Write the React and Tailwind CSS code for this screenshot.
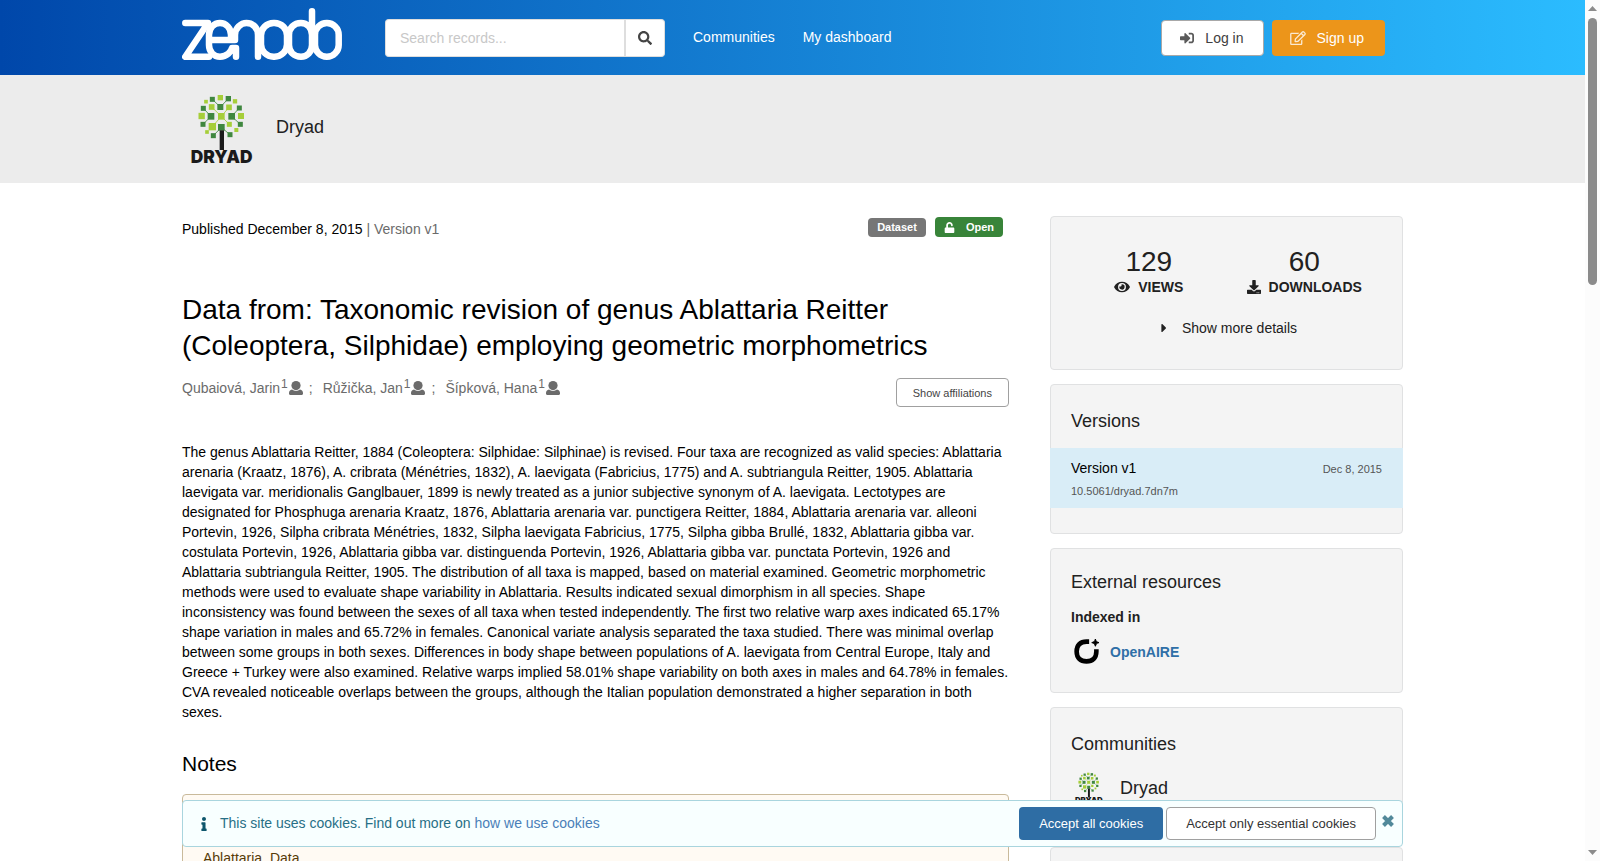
import {
  FaSearch,
  FaSignInAlt,
  FaRegEdit,
  FaUnlock,
  FaEye,
  FaDownload,
  FaCaretRight,
  FaInfo,
} from 'react-icons/fa';

const LIGHT = '#a6ce39';
const DARK = '#3f873f';

// center x, center y, size, color
const leaves = [
  [121, 38, 16, LIGHT],
  [97, 43, 15, DARK],
  [145, 41, 16, DARK],
  [78, 50, 11, LIGHT],
  [165, 49, 13, LIGHT],
  [70, 70, 15, DARK],
  [178, 69, 15, DARK],
  [95, 66, 17, LIGHT],
  [121, 66, 18, DARK],
  [147, 67, 17, LIGHT],
  [65, 93, 19, LIGHT],
  [93, 94, 20, DARK],
  [124, 94, 20, LIGHT],
  [155, 94, 20, DARK],
  [183, 93, 18, LIGHT],
  [69, 118, 15, DARK],
  [97, 125, 22, LIGHT],
  [124, 127, 20, DARK],
  [148, 118, 15, LIGHT],
  [181, 118, 15, DARK],
  [81, 141, 11, LIGHT],
  [169, 135, 12, LIGHT],
  [100, 152, 15, DARK],
  [150, 149, 15, DARK],
];

const creators = [
  { name: 'Qubaiová, Jarin', affiliation: 1 },
  { name: 'Růžička, Jan', affiliation: 1 },
  { name: 'Šípková, Hana', affiliation: 1 },
];

function ZenodoLogo() {
  return (
    <svg viewBox="0 0 160 52" className="h-[52px] w-40" fill="none" stroke="#fff" strokeWidth="6.5" strokeLinecap="round" strokeLinejoin="round" aria-hidden="true">
      <path d="M3.300 15H26L3.300 48.700H27" />
      <path d="M28 32H53V27C53 20 59 15 64.500 15C71 15 76 20 76 27V48.700" />
      <path d="M49 31V27C49 20 44 15 38 15C32 15 27 20 27 27V37C27 44 32 48.700 38 48.700C45 48.700 49 44 50 40H54V48.700" />
      <rect x="79" y="15" width="26" height="33.700" rx="12.500" />
      <path d="M130 3.300V37C130 44 125 48.700 119 48.700C112 48.700 107 44 107 37V27C107 20 112 15 119 15C125 15 130 20 130 27" />
      <rect x="133" y="15" width="23.700" height="33.700" rx="11.800" />
    </svg>
  );
}

function DryadLogo({ className }) {
  return (
    <svg viewBox="6 12 240 240" className={className} role="img" aria-label="Dryad">
      <g stroke={DARK} strokeWidth="2.500">
        <path d="M97 43L121 66L145 41M70 70L93 94L69 118M178 69L155 94L181 118M100 152L124 127L150 149" fill="none" />
        <path d="M95 66L124 94L147 67M97 125L124 94L148 118" stroke={LIGHT} fill="none" />
      </g>
      {leaves.map(([x, y, size, color]) => (
        <rect key={`${x}-${y}`} x={x - size / 2} y={y - size / 2} width={size} height={size} fill={color} />
      ))}
      <rect x="119" y="136" width="13" height="59" fill="#1a1a1a" />
      <text x="125" y="235" textAnchor="middle" fontSize="52" fontWeight="900" fontFamily="Inter, sans-serif" fill="#1a1a1a">
        DRYAD
      </text>
    </svg>
  );
}

function OpenAireLogo() {
  return (
    <svg viewBox="0 0 76 76" className="h-[25px] w-[25px]" aria-hidden="true">
      <path d="M46 8H38C19 8 8 19 8 38C8 57 19 68 38 68C57 68 68 57 68 38V31" fill="none" stroke="#000" strokeWidth="14" />
      <path d="M65 0C67 7 69 9 76 11C69 13 67 15 65 22C63 15 61 13 54 11C61 9 63 7 65 0Z" stroke="#000" strokeWidth="3" />
    </svg>
  );
}

function UserIcon() {
  return (
    <svg viewBox="0 0 14 14" className="h-3.5 w-3.5" fill="currentColor" aria-hidden="true">
      <ellipse cx="7" cy="4.600" rx="4.600" ry="4.600" />
      <path d="M3 8.600C5.300 10.300 8.700 10.300 11 8.600C12.900 9 14 10.200 14 12V12.800C14 13.500 13.500 14 12.800 14H1.200C.5 14 0 13.500 0 12.800V12C0 10.200 1.100 9 3 8.600Z" />
    </svg>
  );
}

function CloseIcon() {
  return (
    <svg viewBox="0 0 12 12" className="h-3 w-3" fill="none" stroke="currentColor" strokeWidth="4" aria-hidden="true">
      <path d="M1.500 1.500L10.500 10.500M10.500 1.500L1.500 10.500" />
    </svg>
  );
}

function Header() {
  return (
    <header className="bg-linear-to-r/srgb from-[#0047aa] to-[#2bbcff] text-white">
      <div className="mx-auto flex h-[75px] w-full max-w-[1221px] items-center">
        <a href="#home" aria-label="Zenodo" className="mt-2 self-start">
          <ZenodoLogo />
        </a>
        <form className="ml-[43px] flex h-[38px]" onSubmit={(e) => e.preventDefault()}>
          <input
            type="text"
            aria-label="Search records"
            placeholder="Search records..."
            className="w-[239px] rounded-l border border-r-0 border-[#dedede] bg-white px-3.5 text-sm text-black placeholder:text-[#c8c8c8]"
          />
          <button
            type="submit"
            aria-label="Search"
            className="flex w-[41px] items-center justify-center rounded-r border border-l-2 border-[#dedede] bg-white text-[#444]"
          >
            <FaSearch className="h-3.5 w-3.5" />
          </button>
        </form>
        <nav className="ml-7 flex gap-7 pb-0.5 text-sm">
          <a href="#communities">Communities</a>
          <a href="#dashboard">My dashboard</a>
        </nav>
        <div className="mr-[18px] ml-auto flex gap-2 text-sm">
          <button className="flex h-9 items-center gap-[11px] rounded border border-[#a8a8a8] bg-white pr-[19px] pl-[18px] text-[#404040]">
            <FaSignInAlt className="h-3.5 w-3.5 text-[#5a5a5a]" />
            Log in
          </button>
          <button className="flex h-9 items-center gap-[11px] rounded bg-[#ec951a] pr-[21px] pl-[18px]">
            <FaRegEdit className="h-3.5 w-4 opacity-80" />
            Sign up
          </button>
        </div>
      </div>
    </header>
  );
}

function Card({ title, children, className = '' }) {
  return (
    <section className={`rounded border border-[#e0e1e2] bg-[#f4f4f4] text-[#212121] ${className}`}>
      {title && <h2 className="px-5 text-lg leading-6">{title}</h2>}
      {children}
    </section>
  );
}

function Stat({ icon, label, value }) {
  return (
    <div className="flex flex-col-reverse">
      <dt className="flex items-center justify-center gap-2 text-sm leading-[18px] font-bold">
        {icon}
        {label}
      </dt>
      <dd className="text-[28px] leading-8">{value}</dd>
    </div>
  );
}

function Sidebar() {
  return (
    <aside className="flex flex-col gap-3.5">
      <Card className="h-[154px] px-5 pt-[29px]">
        <dl className="grid grid-cols-2 text-center">
          <Stat icon={<FaEye className="h-3.5 w-4" />} label="VIEWS" value="129" />
          <Stat icon={<FaDownload className="h-3.5 w-3.5" />} label="DOWNLOADS" value="60" />
        </dl>
        <button className="mx-auto mt-[22px] flex items-center gap-3.5 pl-1 text-sm">
          <FaCaretRight className="h-3.5 w-2" />
          Show more details
        </button>
      </Card>

      <Card title="Versions" className="pt-6 pb-[25px]">
        <div className="-mx-px mt-[15px] bg-[#d9edf7] px-[21px] pt-2 pb-1.5">
          <div className="flex items-center justify-between leading-[22px]">
            <span className="text-sm leading-[22px] text-black">Version v1</span>
            <span className="pt-0.5 text-[11px] text-[#555]">Dec 8, 2015</span>
          </div>
          <a href="#doi" className="block text-[11px] leading-[22px] text-[#555]">
            10.5061/dryad.7dn7m
          </a>
        </div>
      </Card>

      <Card title="External resources" className="h-[145px] pt-[21px]">
        <h3 className="mt-[13px] px-5 text-sm font-bold">Indexed in</h3>
        <a href="#openaire" className="mt-3 flex items-center gap-[11px] px-[23px] text-sm font-bold text-[#2f6fa7]">
          <OpenAireLogo />
          OpenAIRE
        </a>
      </Card>

      <Card title="Communities" className="h-[126px] pt-6">
        <a href="#dryad" className="mt-3.5 flex items-center gap-[13px] px-5 text-lg">
          <DryadLogo className="h-9 w-9" />
          Dryad
        </a>
      </Card>

      <Card className="h-40" />
    </aside>
  );
}

function Record() {
  return (
    <article className="text-sm leading-5 text-black">
      <div className="mt-px flex justify-between leading-6">
        <p>
          Published December 8, 2015 <span className="text-[#6b6b6b]">| Version v1</span>
        </p>
        <div className="mr-1.5 flex h-5 items-end gap-[9px] text-[11px] leading-5 font-bold text-white">
          <span className="rounded-sm bg-[#767676] px-[9px] leading-[19px]">Dataset</span>
          <span className="flex items-center gap-[11px] rounded-sm bg-[#388439] px-[9px]">
            <FaUnlock className="h-[11px] w-[11px]" />
            Open
          </span>
        </div>
      </div>

      <h1 className="mt-[51px] text-[28px] leading-9">
        Data from: Taxonomic revision of genus Ablattaria Reitter (Coleoptera, Silphidae) employing geometric morphometrics
      </h1>

      <div className="mt-3.5 flex items-start justify-between">
        <ul className="flex text-[#6b6b6b]">
          {creators.map((creator, i) => (
            <li key={creator.name} className="flex items-center">
              <a href="#creator">{creator.name}</a>
              <span className="mx-px self-start text-xs leading-3">{creator.affiliation}</span>
              <UserIcon />
              {i < creators.length - 1 && <span className="mr-2.5 ml-1.5">;</span>}
            </li>
          ))}
        </ul>
        <button className="h-[29px] rounded-sm border border-[#a0a0a0] px-4 text-[11px] text-[#444]">
          Show affiliations
        </button>
      </div>

      <p className="mt-[35px]">
        The genus Ablattaria Reitter, 1884 (Coleoptera: Silphidae: Silphinae) is revised. Four taxa are recognized as
        valid species: Ablattaria arenaria (Kraatz, 1876), A. cribrata (Ménétries, 1832), A. laevigata (Fabricius, 1775)
        and A. subtriangula Reitter, 1905. Ablattaria laevigata var. meridionalis Ganglbauer, 1899 is newly treated as a
        junior subjective synonym of A. laevigata. Lectotypes are designated for Phosphuga arenaria Kraatz, 1876,
        Ablattaria arenaria var. punctigera Reitter, 1884, Ablattaria arenaria var. alleoni Portevin, 1926, Silpha
        cribrata Ménétries, 1832, Silpha laevigata Fabricius, 1775, Silpha gibba Brullé, 1832, Ablattaria gibba var.
        costulata Portevin, 1926, Ablattaria gibba var. distinguenda Portevin, 1926, Ablattaria gibba var. punctata
        Portevin, 1926 and Ablattaria subtriangula Reitter, 1905. The distribution of all taxa is mapped, based on
        material examined. Geometric morphometric methods were used to evaluate shape variability in Ablattaria. Results
        indicated sexual dimorphism in all species. Shape inconsistency was found between the sexes of all taxa when
        tested independently. The first two relative warp axes indicated 65.17% shape variation in males and 65.72% in
        females. Canonical variate analysis separated the taxa studied. There was minimal overlap between some groups in
        both sexes. Differences in body shape between populations of A. laevigata from Central Europe, Italy and Greece
        + Turkey were also examined. Relative warps implied 58.01% shape variability on both axes in males and 64.78% in
        females. CVA revealed noticeable overlaps between the groups, although the Italian population demonstrated a
        higher separation in both sexes.
      </p>

      <h2 className="mt-7 text-[21px] leading-7">Notes</h2>
      <div className="mt-4 rounded border border-[#c9ba9b] bg-[#fffaf3] px-5 pt-[53px] pb-3.5 text-[#573a08]">
        <p>Ablattaria, Data</p>
      </div>
    </article>
  );
}

function CookieBanner() {
  return (
    <div className="absolute inset-x-0 bottom-3.5 mx-auto flex h-[47px] w-full max-w-[1221px] items-center rounded border border-[#a9d5de] bg-[#f8ffff] pr-2 pl-[17px] text-sm text-[#276f86]">
      <FaInfo className="h-3.5 w-2 text-[#0e566c]" />
      <p className="ml-3 pb-px">
        This site uses cookies. Find out more on{' '}
        <a href="#cookies" className="text-[#4a80b8]">
          how we use cookies
        </a>
      </p>
      <div className="ml-auto flex gap-[3px] text-[13px]">
        <button className="h-[33px] rounded bg-[#2e6da4] px-5 pt-px text-white">Accept all cookies</button>
        <button className="h-[33px] rounded border border-[#a0a0a0] bg-white px-[19px] pt-px text-[#333]">
          Accept only essential cookies
        </button>
      </div>
      <button aria-label="Close" className="mb-1.5 ml-1.5 text-[#51899a]">
        <CloseIcon />
      </button>
    </div>
  );
}

function Scrollbar() {
  return (
    <div className="flex w-[15px] shrink-0 flex-col items-center bg-[#fcfcfc] py-1.5" aria-hidden="true">
      <svg viewBox="0 0 9 5" className="h-[5px] w-[9px]" fill="#8b8b8b">
        <path d="M4.500 0L9 5H0Z" />
      </svg>
      <div className="mt-[7px] h-[267px] w-[9px] rounded-full bg-[#8b8b8b]" />
      <svg viewBox="0 0 9 5" className="mt-auto h-[5px] w-[9px]" fill="#8b8b8b">
        <path d="M0 0H9L4.500 5Z" />
      </svg>
    </div>
  );
}

export default function App() {
  return (
    <div className="flex h-screen overflow-hidden bg-white font-['Liberation_Sans',Arial,sans-serif]">
      <div className="relative flex-1 overflow-hidden">
        <Header />
        <div className="bg-[#ececec]">
          <div className="mx-auto flex h-[108px] w-full max-w-[1221px] items-center gap-3.5">
            <DryadLogo className="h-20 w-20" />
            <a href="#dryad" className="pb-1 text-lg text-[#212121]">
              Dryad
            </a>
          </div>
        </div>
        <main className="mx-auto grid w-full max-w-[1221px] grid-cols-[1fr_353px] gap-x-[41px] pt-[33px]">
          <Record />
          <Sidebar />
        </main>
        <CookieBanner />
      </div>
      <Scrollbar />
    </div>
  );
}
